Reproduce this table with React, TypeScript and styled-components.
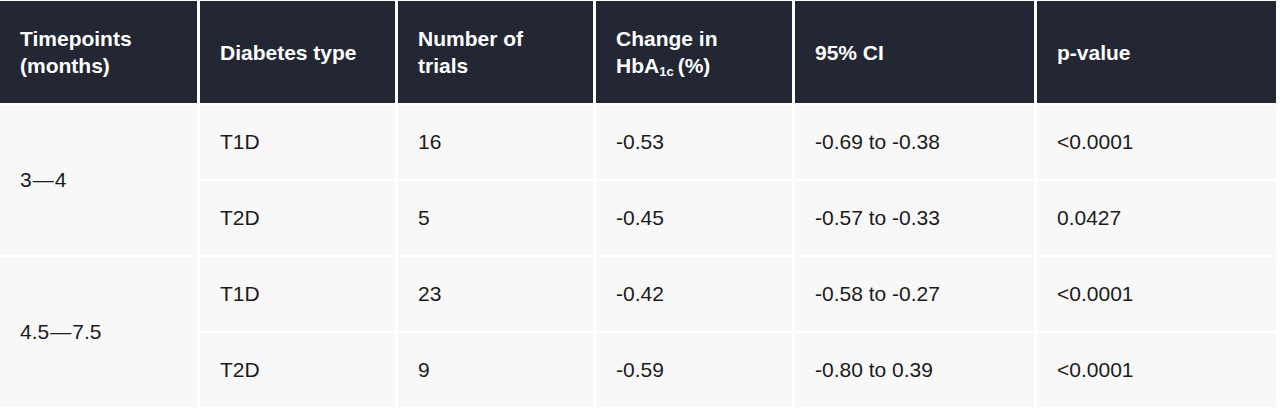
import React from 'react'
import styled, { createGlobalStyle } from 'styled-components'

const GlobalStyle = createGlobalStyle`
  html, body {
    margin: 0;
    padding: 0;
    background: #ffffff;
  }
  body {
    font-family: "Liberation Sans", Arial, Helvetica, sans-serif;
  }
`

const palette = {
  head: '#232733',
  cell: '#f8f8f8',
  text: '#1b1b1b',
}

const TableGrid = styled.div`
  display: grid;
  grid-template-columns: 197px 195px 195px 196px 239px 239px;
  grid-template-rows: 102px repeat(4, 74px);
  column-gap: 3px;
  row-gap: 2px;
  padding-top: 1px;
  background: #ffffff;
`

const HeadCell = styled.div`
  background: ${palette.head};
  color: #ffffff;
  font-weight: 700;
  font-size: 21px;
  line-height: 27px;
  display: flex;
  align-items: center;
  padding: 0 20px;
`

const BodyCell = styled.div<{ $span?: number }>`
  background: ${palette.cell};
  color: ${palette.text};
  font-size: 21px;
  display: flex;
  align-items: center;
  padding: 0 20px;
  ${({ $span }) => ($span ? `grid-row: span ${$span};` : '')}
`

const Sub = styled.sub`
  font-size: 13px;
  vertical-align: -3px;
  line-height: 0;
  margin-right: 4px;
`

const Dash = styled.span`
  margin: 0 1px;
`

type Row = {
  time?: [string, string]
  type: string
  trials: number
  change: string
  ci: string
  p: string
}

const rows: Row[] = [
  { time: ['3', '4'], type: 'T1D', trials: 16, change: '-0.53', ci: '-0.69 to -0.38', p: '<0.0001' },
  { type: 'T2D', trials: 5, change: '-0.45', ci: '-0.57 to -0.33', p: '0.0427' },
  { time: ['4.5', '7.5'], type: 'T1D', trials: 23, change: '-0.42', ci: '-0.58 to -0.27', p: '<0.0001' },
  { type: 'T2D', trials: 9, change: '-0.59', ci: '-0.80 to 0.39', p: '<0.0001' },
]

const App: React.FC = () => {
  return (
    <>
      <GlobalStyle />
      <TableGrid>
        <HeadCell>Timepoints<br />(months)</HeadCell>
        <HeadCell>Diabetes type</HeadCell>
        <HeadCell>Number of<br />trials</HeadCell>
        <HeadCell>
          <span>
            Change in<br />HbA<Sub>1c</Sub>(%)
          </span>
        </HeadCell>
        <HeadCell>95% CI</HeadCell>
        <HeadCell>p-value</HeadCell>

        {rows.map((r, i) => (
          <React.Fragment key={i}>
            {r.time && (
              <BodyCell $span={2}>
                {r.time[0]}<Dash>—</Dash>{r.time[1]}
              </BodyCell>
            )}
            <BodyCell>{r.type}</BodyCell>
            <BodyCell>{r.trials}</BodyCell>
            <BodyCell>{r.change}</BodyCell>
            <BodyCell>{r.ci}</BodyCell>
            <BodyCell>{r.p}</BodyCell>
          </React.Fragment>
        ))}
      </TableGrid>
    </>
  )
}

export default App
